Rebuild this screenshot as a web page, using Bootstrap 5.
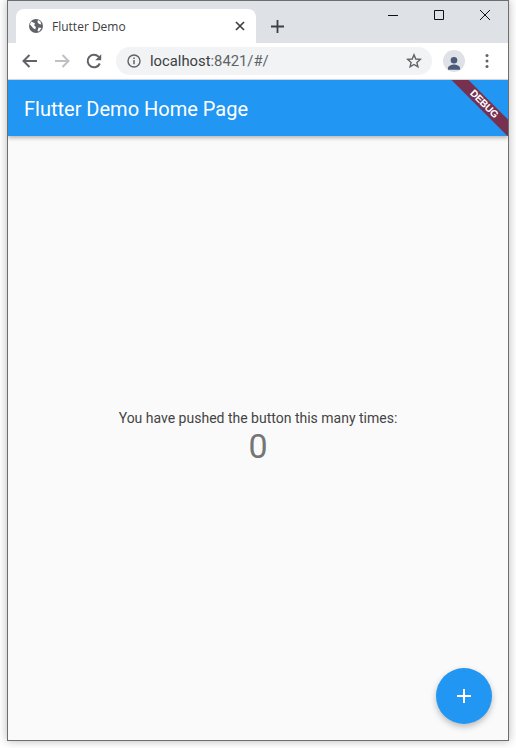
<!DOCTYPE html>
<html lang="en"><head><meta charset="utf-8"><title>Flutter Demo</title>
<link href="https://cdn.jsdelivr.net/npm/bootstrap@5.3.0/dist/css/bootstrap.min.css" rel="stylesheet">
<style>
html,body{margin:0;height:748px;overflow:hidden;background:#fff}
.shell{width:502px;height:741px;margin-left:7px;border:1px solid #6e6e6e;display:flex;flex-direction:column;position:relative;overflow:hidden;background:#fafafa;box-shadow:0 0 9px rgba(0,0,0,.28)}
.strip{height:42px;background:#dee1e6;flex:none;position:relative;padding-left:8px}
.tabby{margin-top:8px;width:240px;height:34px;background:#fff;border-radius:8px 8px 0 0;padding:0 11px 0 12px;font:12px "Open Sans","Noto Sans",sans-serif;color:#3c4043}
.tabby span{margin-left:8px}
.newt{margin:8px 0 0 15px;width:20px;height:34px}
.winbtns{position:absolute;top:0;right:0;height:28px;padding-right:18px}
.winbtns svg{display:block;margin-left:36px}
.tools{height:36px;background:#fff;flex:none;padding:0 0 0 12px}
.navic{width:20px;height:20px;margin-right:12px;flex:none}
.addr{width:316px;height:28px;background:#f1f3f4;border-radius:14px;padding:0 10px 0 11px;font:14.8px Roboto,sans-serif;color:#3c4043}
.addr .dim{color:#5f6368}
.addr .hostx{margin-left:9px;flex:1}
.avatar{width:22px;height:22px;margin-left:11px;border-radius:50%;background:#dee1e6;overflow:hidden;flex:none}
.dots{margin-left:14px;flex:none}
.sep{height:1px;background:#dadce0;flex:none}
.appbar{height:56px;flex:none;background:#2196f3;color:#fff;padding:2px 0 0 16px;font:450 20px Roboto,sans-serif;box-shadow:0 2px 4px rgba(0,0,0,.28);position:relative;z-index:1}
.stage{flex:1;background:#fafafa;font-family:Roboto,sans-serif;padding-bottom:3px}
.msg{font-size:14px;line-height:20px;color:#444}
.cnt{font-size:34px;line-height:38px;margin-top:-1px;color:#757575}
.fab{position:absolute;right:16px;bottom:16px;width:56px;height:56px;border-radius:50%;background:#2196f3;border:0;padding:0;box-shadow:0 3px 6px rgba(0,0,0,.25);z-index:2}
.appclip{position:absolute;left:0;top:79px;width:100%;height:56px;overflow:hidden;z-index:3;pointer-events:none}
.ribbon{position:absolute;top:17.5px;left:435px;width:82px;height:12px;background:rgba(160,0,0,.68);transform:rotate(45deg);color:#fff;font:700 10px/12px "Liberation Sans",sans-serif;text-align:center;letter-spacing:-.2px}
</style></head><body>
<div class="shell">
  <div class="strip d-flex">
    <div class="tabby d-flex align-items-center">
      <svg width="16" height="16" viewBox="0 0 16 16"><circle cx="8" cy="8" r="7" fill="#5f6368"/><path d="M3 3.500 7 5.200 6.200 7.500 8 9 7.200 11.500 5 10 2 6.500ZM10 2l2.500 1.500.8 3-2.300-.5-1.600-2ZM10.500 9.500l3 .5-2.500 3.500-1.500-.5Z" fill="#fff"/></svg>
      <span class="flex-grow-1">Flutter Demo</span>
      <svg width="10" height="10" viewBox="0 0 10 10"><path d="M1 1l8 8M9 1l-8 8" stroke="#3c4043" stroke-width="1.700"/></svg>
    </div>
    <div class="newt d-flex align-items-center"><svg width="13" height="13" viewBox="0 0 13 13"><path d="M6.500 0v13M0 6.500h13" stroke="#3c4043" stroke-width="1.800"/></svg></div>
    <div class="winbtns d-flex align-items-center">
      <svg width="10" height="10" viewBox="0 0 10 10"><path d="M0 5.500h10" stroke="#111"/></svg>
      <svg width="10" height="10" viewBox="0 0 10 10"><path d="M.5.500h9v9h-9z" fill="none" stroke="#111"/></svg>
      <svg width="10" height="10" viewBox="0 0 10 10"><path d="M0 0l10 10M10 0 0 10" stroke="#111" fill="none"/></svg>
    </div>
  </div>
  <div class="tools d-flex align-items-center">
    <svg class="navic" viewBox="0 0 20 20"><path d="M17 10H4M9.500 4 3.500 10l6 6" fill="none" stroke="#5f6368" stroke-width="2"/></svg>
    <svg class="navic" viewBox="0 0 20 20"><path d="M3 10h13M10.500 4l6 6-6 6" fill="none" stroke="#bdc1c6" stroke-width="2"/></svg>
    <svg class="navic" viewBox="0 0 20 20"><path d="M15.800 12.500A6.300 6.300 0 1 1 14.500 5.600L16.500 7.500" fill="none" stroke="#5f6368" stroke-width="2"/><path d="M17.200 3.200v6h-6z" fill="#5f6368"/></svg>
    <div class="addr d-flex align-items-center">
      <svg width="14" height="14" viewBox="0 0 14 14"><circle cx="7" cy="7" r="6" fill="none" stroke="#5f6368" stroke-width="1.400"/><path d="M7 6v4.200M7 3.500v1.500" stroke="#5f6368" stroke-width="1.500"/></svg>
      <span class="hostx">localhost<span class="dim">:8421/#/</span></span>
      <svg width="16" height="16" viewBox="0 0 16 16"><path d="M8 1.800 9.800 6l4.500.4-3.400 3 1 4.400L8 11.500 4.100 13.800l1-4.400-3.400-3L6.200 6Z" fill="none" stroke="#5f6368" stroke-width="1.400"/></svg>
    </div>
    <div class="avatar"><svg width="22" height="22" viewBox="0 0 22 22"><circle cx="11" cy="7.300" r="3.300" fill="#4a5a78"/><path d="M5 16.700v-1.500c0-2.500 4-3.700 6-3.700s6 1.200 6 3.700v1.500Z" fill="#4a5a78"/></svg></div>
    <svg class="dots" width="16" height="16" viewBox="0 0 16 16"><circle cx="8" cy="2.500" r="1.500" fill="#5f6368"/><circle cx="8" cy="8" r="1.500" fill="#5f6368"/><circle cx="8" cy="13.500" r="1.500" fill="#5f6368"/></svg>
  </div>
  <div class="sep"></div>
  <div class="appbar d-flex align-items-center">Flutter Demo Home Page</div>
  <div class="stage d-flex flex-column align-items-center justify-content-center text-center">
    <div class="msg">You have pushed the button this many times:</div>
    <div class="cnt">0</div>
  </div>
  <button class="fab d-flex align-items-center justify-content-center" type="button" aria-label="Increment"><svg width="14" height="14" viewBox="0 0 14 14"><path d="M7 0v14M0 7h14" stroke="#fff" stroke-width="2"/></svg></button>
  <div class="appclip"><div class="ribbon">DEBUG</div></div>
</div>
</body></html>
